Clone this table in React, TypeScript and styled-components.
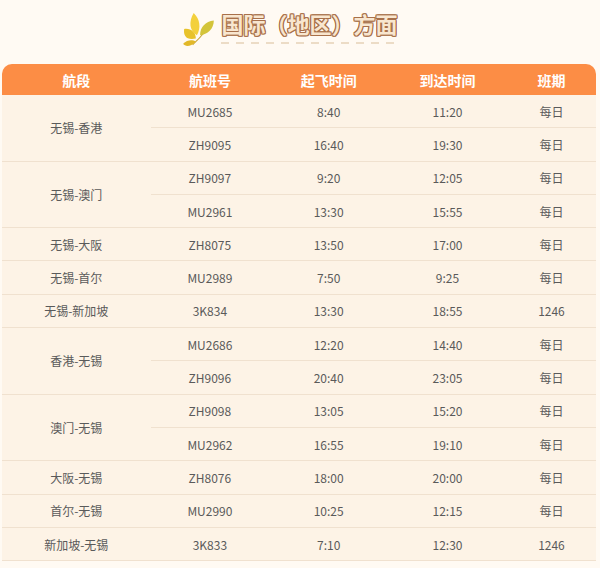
import React from "react";
import styled, { createGlobalStyle } from "styled-components";

const Global = createGlobalStyle`
  html, body {
    margin: 0;
    padding: 0;
    background: #fffaf3;
  }
  body {
    font-family: "Noto Sans CJK SC", "Noto Sans", sans-serif;
    width: 600px;
    height: 568px;
    overflow: hidden;
  }
`;

const Page = styled.div`
  width: 600px;
  padding: 0 4px 0 2px;
  box-sizing: border-box;
`;

const TitleBar = styled.div`
  display: flex;
  justify-content: center;
  align-items: flex-start;
  gap: 6px;
  height: 64px;
  padding-right: 17px;
  box-sizing: border-box;
`;

const Leaf = styled.svg`
  width: 32px;
  height: 36px;
  margin-top: 12px;
  flex: none;
`;

const TitleBlock = styled.div`
  display: flex;
  flex-direction: column;
  align-items: stretch;
  padding-top: 8px;
`;

const TitleText = styled.div`
  font-size: 22px;
  font-weight: 700;
  line-height: 30px;
  color: #f8e6cf;
  text-shadow:
    1px 0 0 #a8704a, -1px 0 0 #a8704a, 0 1px 0 #a8704a, 0 -1px 0 #a8704a,
    1px 1px 0 #a8704a, -1px -1px 0 #a8704a, 1px -1px 0 #a8704a, -1px 1px 0 #a8704a;
`;

const Dashes = styled.div`
  height: 2px;
  margin-top: 4px;
  background: repeating-linear-gradient(
    to right,
    #ecdcc6 0,
    #ecdcc6 8px,
    transparent 8px,
    transparent 15px
  );
`;

const Table = styled.table`
  width: 594px;
  border-collapse: separate;
  border-spacing: 0;
  table-layout: fixed;
  background: #fdf3e6;
  border-radius: 10px 10px 0 0;
  overflow: hidden;
`;

const HeadCell = styled.th<{ $w: number }>`
  width: ${(p) => p.$w}%;
  height: 31px;
  padding: 0;
  background: #fc8d45;
  color: #fff;
  font-size: 14px;
  font-weight: 700;
  text-align: center;
  vertical-align: middle;
`;

const Cell = styled.td`
  height: 32.3px;
  padding: 0;
  text-align: center;
  vertical-align: middle;
  font-size: 12px;
  color: #5a5a5a;
  border-bottom: 1px solid #f0e1cf;
`;

type Flight = [string, string, string, string];
type Group = { route: string; flights: Flight[] };

const groups: Group[] = [
  { route: "无锡-香港", flights: [["MU2685", "8:40", "11:20", "每日"], ["ZH9095", "16:40", "19:30", "每日"]] },
  { route: "无锡-澳门", flights: [["ZH9097", "9:20", "12:05", "每日"], ["MU2961", "13:30", "15:55", "每日"]] },
  { route: "无锡-大阪", flights: [["ZH8075", "13:50", "17:00", "每日"]] },
  { route: "无锡-首尔", flights: [["MU2989", "7:50", "9:25", "每日"]] },
  { route: "无锡-新加坡", flights: [["3K834", "13:30", "18:55", "1246"]] },
  { route: "香港-无锡", flights: [["MU2686", "12:20", "14:40", "每日"], ["ZH9096", "20:40", "23:05", "每日"]] },
  { route: "澳门-无锡", flights: [["ZH9098", "13:05", "15:20", "每日"], ["MU2962", "16:55", "19:10", "每日"]] },
  { route: "大阪-无锡", flights: [["ZH8076", "18:00", "20:00", "每日"]] },
  { route: "首尔-无锡", flights: [["MU2990", "10:25", "12:15", "每日"]] },
  { route: "新加坡-无锡", flights: [["3K833", "7:10", "12:30", "1246"]] },
];

const heads: [string, number][] = [
  ["航段", 25],
  ["航班号", 20],
  ["起飞时间", 20],
  ["到达时间", 20],
  ["班期", 15],
];

function LeafIcon() {
  return (
    <Leaf viewBox="0 0 30 34">
      <path d="M9 31 C 14 26, 19 22, 24 13" stroke="#c9a63a" strokeWidth="1" fill="none" />
      <path d="M12 25 C 3 27, 0 22, 1 16 C 7 15, 12 19, 12 25 Z" fill="#e8c22a" />
      <path d="M13 22 C 6 18, 5 9, 10 1 C 16 7, 17 15, 13 22 Z" fill="#f3d03c" />
      <path d="M16 22 C 16 14, 21 9, 29 8 C 29 16, 23 21, 16 22 Z" fill="#d3c43a" />
      <path d="M12 28 C 7 33, 2 33, 0 30 C 4 26, 9 26, 12 28 Z" fill="#e2b828" />
    </Leaf>
  );
}

export default function App() {
  return (
    <Page>
      <Global />
      <TitleBar>
        <LeafIcon />
        <TitleBlock>
          <TitleText>国际（地区）方面</TitleText>
          <Dashes />
        </TitleBlock>
      </TitleBar>
      <Table>
        <thead>
          <tr>
            {heads.map(([h, w]) => (
              <HeadCell key={h} $w={w}>
                {h}
              </HeadCell>
            ))}
          </tr>
        </thead>
        <tbody>
          {groups.map((g) =>
            g.flights.map((f, i) => (
              <tr key={f[0]}>
                {i === 0 && <Cell rowSpan={g.flights.length}>{g.route}</Cell>}
                {f.map((v, j) => (
                  <Cell key={j}>{v}</Cell>
                ))}
              </tr>
            ))
          )}
        </tbody>
      </Table>
    </Page>
  );
}
